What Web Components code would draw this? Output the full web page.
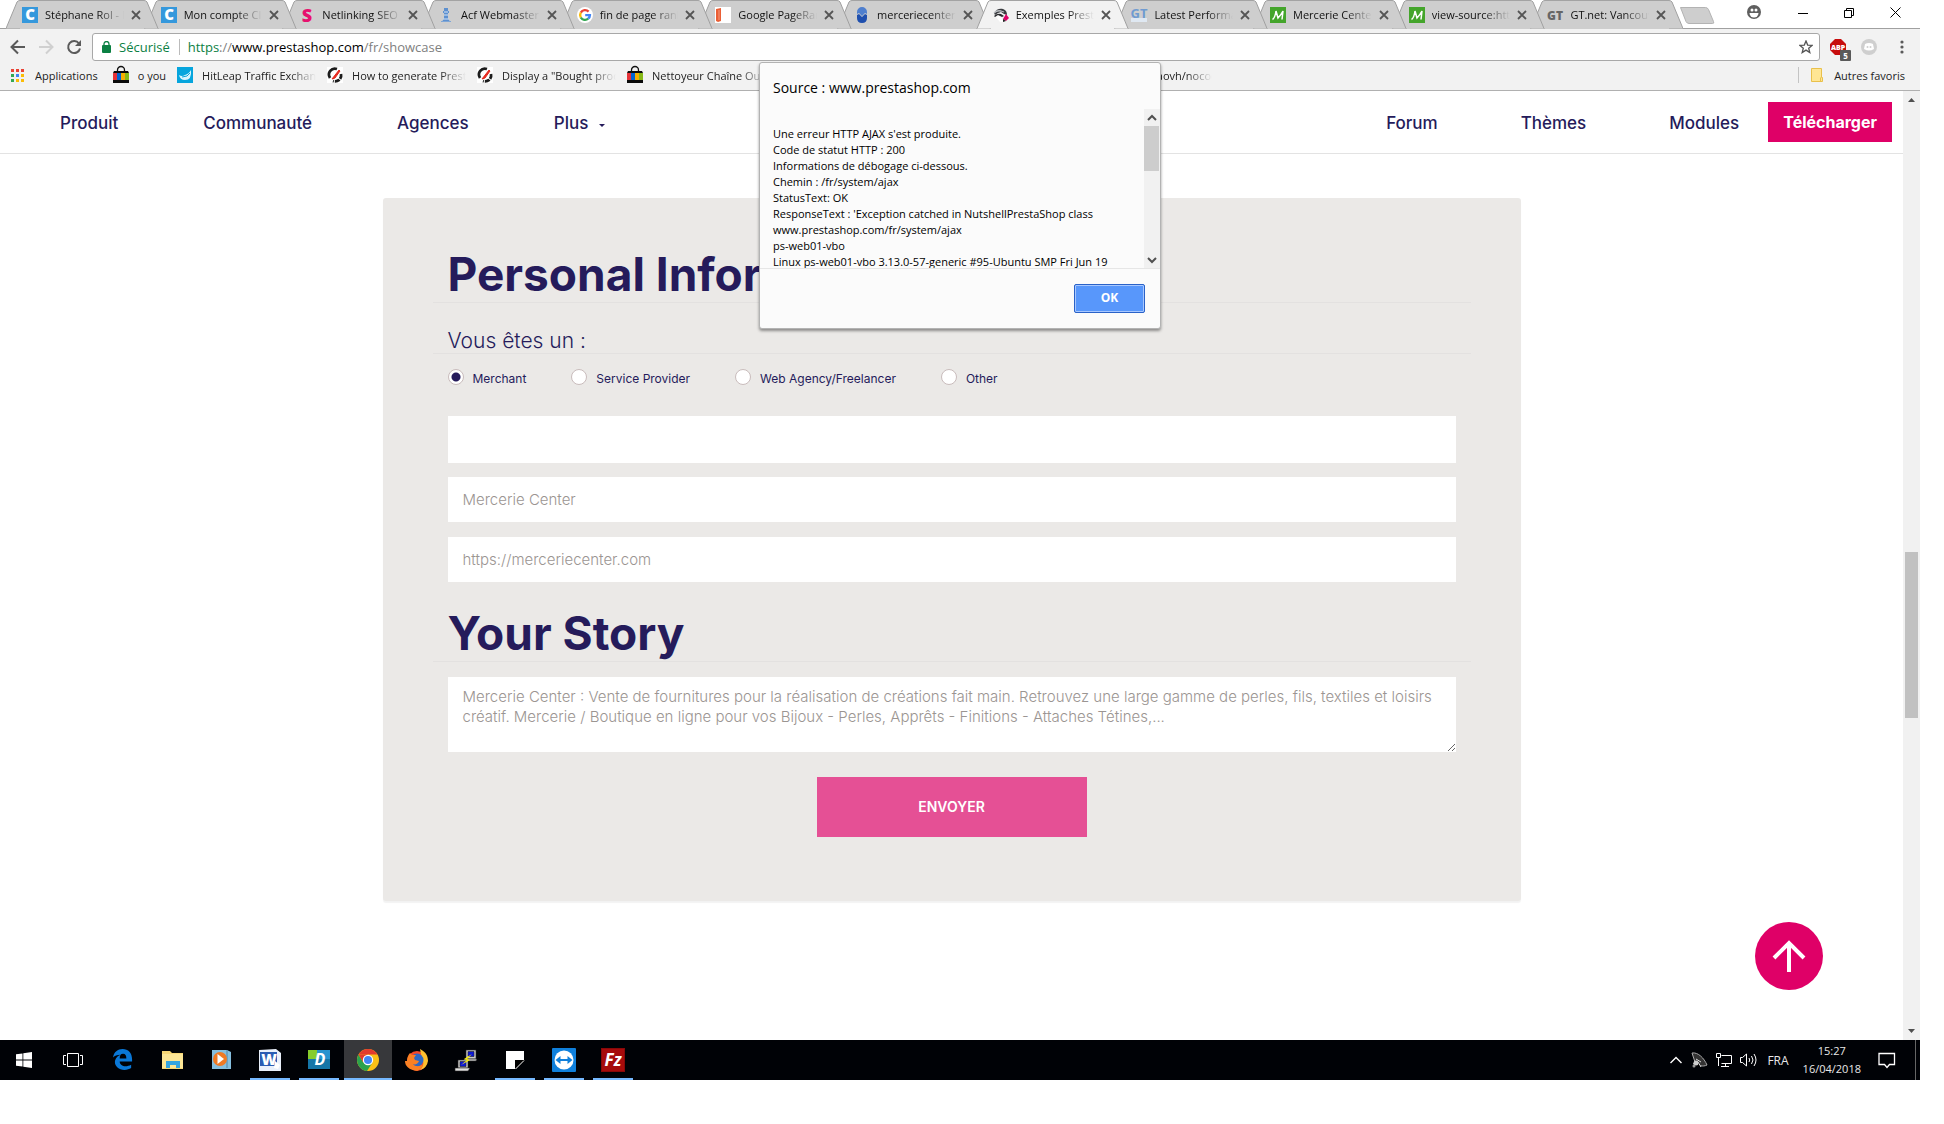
<!DOCTYPE html>
<html lang="fr">
<head>
<meta charset="utf-8">
<title>Exemples PrestaShop</title>
<style>
  html, body {
    height: 100%;
    margin: 0;
  }

  body {
    box-sizing: border-box;
    padding: 0 24px 44px 0;
    background: #fff;
    --ui: "Open Sans", "Noto Sans", sans-serif;
    --brand: Inter, "Open Sans", sans-serif;
    --navy: #251b5b;
    --pink: #df0067;
    font-family: var(--ui);
  }
</style>
</head>
<body>
<desk-top></desk-top>

<script>
const letterIcon = (letter, fill, color, size = 14, y = 13) => `
  <svg viewBox="0 0 16 16" width="16" height="16" overflow="visible" aria-hidden="true">
    <rect width="16" height="16" fill="${fill}"/>
    <text x="8" y="${y}" text-anchor="middle" font-family="Open Sans, sans-serif" font-weight="800" font-size="${size}" fill="${color}">${letter}</text>
  </svg>`;

const svg = (body, size = 16, box = 16) =>
  `<svg viewBox="0 0 ${box} ${box}" width="${size}" height="${size}" overflow="visible" aria-hidden="true">${body}</svg>`;

const icons = {
  c: letterIcon("C", "#3598dc", "#fff", 15),
  s: letterIcon("S", "none", "#e6126f", 18, 15),
  gtBlue: svg(`<rect y="11" width="16" height="4" fill="#dfe8f2"/>
    <text x="8" y="11" text-anchor="middle" font-family="Open Sans, sans-serif" font-weight="700" font-size="13" fill="#6f9bd1">GT</text>`),
  gtGrey: letterIcon("GT", "none", "#666", 12),
  m: svg(`<rect width="16" height="16" fill="#44a52b"/>
    <path d="M2.500 12.500Q5 11 6 4L8 11Q11 8 13 4L12 12.500" fill="none" stroke="#fff" stroke-width="1.500"/>`),
  tower: svg(`<path d="M6 1h4v3h1v2h-1v5l2 4H4l2-4V6H5V4h1z" fill="#5d90cf"/>
    <path d="M6 5h4M6 8h4M5 12h6" stroke="#d6e4f5"/><path d="M3 14h10v1H3z" fill="#7fa6d6"/>`),
  google: svg(`<circle cx="8" cy="8" r="8" fill="#fff"/>
    <g fill="none" stroke-width="2.400">
      <path d="M11.600 4.600A4.900 4.900 0 0 0 3.800 5.600" stroke="#ea4335"/>
      <path d="M3.800 5.600a4.900 4.900 0 0 0 0 4.900" stroke="#fbbc05"/>
      <path d="M3.800 10.500a4.900 4.900 0 0 0 7.400 1.200" stroke="#34a853"/>
      <path d="M11.200 11.700A4.900 4.900 0 0 0 12.900 8.100H8.200" stroke="#4285f4"/>
    </g>`),
  pagerank: svg(`<rect width="16" height="16" fill="#fff"/><path d="M1 2l5-1v13l-3 1-2-1z" fill="#ea5f36"/><path d="M4 3v10" stroke="#f49a7c"/>`),
  mercerie: svg(`<path d="M3 7V5a5 5 0 0 1 10 0v2l-2-1-3 3-3-3z" fill="#4f7fce"/>
    <path d="M3 8l2-1 3 3 3-3 2 1v3q0 5-5 5t-5-5z" fill="#1f4fae"/>`),
  presta: svg(`<path d="M1 6C3 2 7 1 10 2c3 1 4 3 4 6l-3-1-3-2-3 1-3 2z" fill="#3a3c40"/>
    <path d="M1 6q3-3 7-2l3 1" fill="none" stroke="#b9bcc0" stroke-width="1.300"/>
    <path d="M1 9q3-3 7-2l3 2-2 1-4-2-3 2z" fill="#2a2b2e"/>
    <path d="M3 10l3-1 3 2 1 4H7z" fill="#fff"/>
    <path d="M13 7l3 4-3 3-3-2z" fill="#df0067"/><path d="M10 12l3 2-3 1z" fill="#222"/>`),
  bag: svg(`<path d="M4.500 5V3a3 3 0 0 1 7 0v2" fill="none" stroke="#111" stroke-width="1.300"/>
    <path d="M1 4h14l1 2v10H0V6z" fill="#0a0a0a"/>
    <path d="M0 6h4v7H0z" fill="#e53238"/><path d="M4 6h4v7H4z" fill="#0064d2"/>
    <path d="M8 6h4v7H8z" fill="#f5af02"/><path d="M12 6h4v7h-4z" fill="#86b817"/>`),
  hitleap: svg(`<rect width="16" height="16" fill="#06a5dd"/>
    <path d="M2 8q3 2 6 0 4-1 6-5 1 10-6 10-5 0-6-5z" fill="#d9f4fd"/><path d="M5 10l5-1 3-3" stroke="#06a5dd" fill="none"/>`),
  dash: svg(`<rect width="16" height="16" fill="#fff"/>
    <g fill="none" stroke="#1c1c1c" stroke-width="2.800"><path d="M10 2A6 6 0 0 0 3 11"/><path d="M14 7a6 6 0 0 1-8 7" stroke-dasharray="5 1"/></g>
    <path d="M5 12L12 3l1 1-5 7z" fill="#e62a1f" stroke="#e62a1f"/>`),
  apps: svg(`<g><path d="M1 2h3v3H1zM6 2h3v3H6zM11 2h3v3h-3z" fill="#ea4335"/>
    <path d="M1 7h3v3H1z" fill="#34a853"/><path d="M6 7h3v3H6z" fill="#4285f4"/><path d="M11 7h3v3h-3z" fill="#fbbc05"/>
    <path d="M1 12h3v3H1z" fill="#34a853"/><path d="M6 12h3v3H6zM11 12h3v3h-3z" fill="#fbbc05"/></g>`),
  folder: svg(`<path d="M2.500 1.500h10v9h1v4h-11z" fill="#ffe694" stroke="#e9c04b"/><path d="M11.500 14v-3.500" stroke="#e9c04b" fill="none"/>`)
};

// Fills the shadow root of an element once.
function paint(host, html) {
  if (!host.shadowRoot) host.attachShadow({ mode: "open" });
  host.shadowRoot.innerHTML = html;
}

class DesktopView extends HTMLElement {
  connectedCallback() {
    paint(this, `
      <style>
        :host {
          display: flex;
          flex-direction: column;
          height: 100%;
          position: relative;
          overflow: hidden;
        }
        main {
          flex: 1;
          min-height: 0;
          display: flex;
          position: relative;
        }
        .page {
          flex: 1;
          overflow: hidden;
        }
        back-to-top {
          position: absolute;
          right: 97px;
          bottom: 50px;
        }
        alert-box {
          position: absolute;
          top: 62px;
          left: 0;
          right: 0;
          margin: 0 auto;
        }
      </style>
      <tab-strip></tab-strip>
      <address-bar></address-bar>
      <bookmark-bar></bookmark-bar>
      <main>
        <div class="page">
          <site-nav></site-nav>
          <showcase-form></showcase-form>
        </div>
        <scroll-track style="--before: 444; --thumb: 166; --after: 305"></scroll-track>
        <back-to-top></back-to-top>
      </main>
      <task-bar></task-bar>
      <alert-box></alert-box>`);
  }
}

class BrowserTab extends HTMLElement {
  connectedCallback() {
    const fill = this.hasAttribute("active") ? "#f2f2f2" : "#cecece";
    paint(this, `
      <style>
        :host {
          display: grid;
          flex: 1 1 0;
          min-width: 0;
          height: 29px;
          margin-right: -13px;
          position: relative;
        }
        .shape, .content {
          grid-area: 1 / 1;
          display: flex;
          min-width: 0;
        }
        .shape div {
          flex: 1;
          background: ${fill};
          border-top: 1px solid #a3a3a3;
          box-sizing: border-box;
        }
        .content {
          align-items: center;
          padding: 1px 16px 0 16px;
        }
        .title {
          flex: 1;
          margin-left: 7px;
          padding-bottom: 1px;
          overflow: hidden;
          white-space: nowrap;
          font-size: 11px;
          color: #111;
          -webkit-mask-image: linear-gradient(to left, transparent, #000 26px);
          mask-image: linear-gradient(to left, transparent, #000 26px);
        }
        button {
          width: 18px;
          height: 16px;
          padding: 0 0 0 7px;
          border: 0;
          background: none;
          display: flex;
          align-items: center;
        }
      </style>
      <div class="shape">
        <svg width="14" height="29" viewBox="0 0 14 29" aria-hidden="true"><path d="M0 28.500L11 2q1-1.500 3-1.500v28z" fill="${fill}"/><path d="M0 28.500L11 2q1-1.500 3-1.500" fill="none" stroke="#a0a0a0"/></svg>
        <div></div>
        <svg width="14" height="29" viewBox="0 0 14 29" aria-hidden="true"><path d="M14 28.500L3 2Q2 .5 0 .5v28z" fill="${fill}"/><path d="M14 28.500L3 2Q2 .5 0 .5" fill="none" stroke="#a0a0a0"/></svg>
      </div>
      <div class="content">
        ${icons[this.getAttribute("icon")]}
        <span class="title"><slot></slot></span>
        <button aria-label="Fermer">
          <svg width="10" height="10" viewBox="0 0 10 10"><path d="M1 1l8 8M9 1L1 9" stroke="#555" stroke-width="1.800"/></svg>
        </button>
      </div>`);
  }
}

class TabStrip extends HTMLElement {
  connectedCallback() {
    const tabs = [
      ["c", "Stéphane Rol - M"], ["c", "Mon compte Cli"], ["s", "Netlinking SEO"], ["tower", "Acf Webmaster"],
      ["google", "fin de page rank"], ["pagerank", "Google PageRank"], ["mercerie", "merceriecenter."],
      ["presta", "Exemples Prestas"], ["gtBlue", "Latest Performan"], ["m", "Mercerie Center"],
      ["m", "view-source:http"], ["gtGrey", "GT.net: Vancouv"]
    ];
    paint(this, `
      <style>
        :host {
          display: flex;
          height: 29px;
          background: linear-gradient(#fff 28px, #a0a0a0 28px);
        }
        .tabs {
          flex: 1;
          display: flex;
          padding: 0 13px 0 6px;
        }
        .new {
          width: 36px;
          height: 20px;
          margin: 6px 16px 0 -4px;
          padding: 0;
          border: 0;
          background: none;
        }
        .window {
          display: flex;
          padding-right: 2px;
        }
        .window button {
          width: 46px;
          height: 27px;
          padding: 0;
          border: 0;
          background: none;
        }
        .window button:first-child {
          margin-right: 3px;
        }
      </style>
      <div class="tabs">
        ${tabs.map(([icon, title], i) =>
          `<browser-tab icon="${icon}" ${i === 7 ? "active" : ""} style="z-index: ${i === 7 ? 20 : 12 - i}">${title}</browser-tab>`).join("")}
      </div>
      <button class="new" aria-label="Nouvel onglet">
        <svg width="36" height="20" viewBox="0 0 36 20"><path d="M1.500 1.500h25q2 0 3 2l5 12q1 2-1 2H10q-2 0-3-2z" fill="#cecece" stroke="#b3b3b3"/></svg>
      </button>
      <div class="window">
        <button aria-label="Profil"><svg width="14" height="14" viewBox="0 0 14 14"><circle cx="7" cy="7" r="7" fill="#5f5f5f"/><circle cx="5" cy="5" r="1.500" fill="#fff"/><circle cx="9" cy="5" r="1.500" fill="#fff"/><path d="M2.500 8h9A4.500 4.500 0 0 1 2.500 8z" fill="#fff"/></svg></button>
        <button aria-label="Réduire"><svg width="10" height="10"><path d="M0 5.500h10" stroke="#000"/></svg></button>
        <button aria-label="Restaurer"><svg width="10" height="10"><path d="M.5 2.500h7v7h-7zM2.500 2V.5h7v7H8" fill="none" stroke="#000"/></svg></button>
        <button aria-label="Fermer la fenêtre"><svg width="11" height="11"><path d="M.5.5l10 10M10.500.5l-10 10" stroke="#000"/></svg></button>
      </div>`);
  }
}

class AddressBar extends HTMLElement {
  connectedCallback() {
    paint(this, `
      <style>
        :host {
          display: flex;
          align-items: center;
          height: 32px;
          padding: 4px 13px 0 10px;
          box-sizing: border-box;
          background: #f2f2f2;
        }
        button {
          padding: 0;
          border: 0;
          background: none;
          display: flex;
          position: relative;
        }
        .nav {
          width: 28px;
        }
        .box {
          flex: 1;
          display: flex;
          align-items: center;
          height: 28px;
          margin: 0 9px 0 -2px;
          padding: 0 6px 0 9px;
          box-sizing: border-box;
          background: #fff;
          border: 1px solid #a8a8a8;
          border-radius: 3px;
          font-size: 13px;
        }
        .secure {
          margin-left: 8px;
          padding-right: 9px;
          line-height: 16px;
          border-right: 1px solid #bbb;
          color: #0b8043;
        }
        .url {
          flex: 1;
          margin-left: 8px;
          line-height: 16px;
          color: #808080;
        }
        .url b {
          font-weight: 400;
          color: #000;
        }
        .url i {
          font-style: normal;
          color: #0b8043;
        }
        .ext {
          width: 32px;
        }
        .badge {
          position: absolute;
          left: 11px;
          top: 11px;
          width: 11px;
          height: 11px;
          background: #5a5a5a;
          border-radius: 1px;
          color: #fff;
          font: 700 8px/11px var(--ui);
          text-align: center;
        }
      </style>
      <button class="nav" aria-label="Précédent"><svg width="16" height="16"><path d="M15 8H2M8 1.500L1.500 8 8 14.500" fill="none" stroke="#5a5a5a" stroke-width="2"/></svg></button>
      <button class="nav" aria-label="Suivant"><svg width="16" height="16"><path d="M1 8h13M8 1.500L14.500 8 8 14.500" fill="none" stroke="#d0d0d0" stroke-width="2"/></svg></button>
      <button class="nav" aria-label="Actualiser"><svg width="16" height="16"><path d="M13 4.500A6 6 0 1 0 14 9.500" fill="none" stroke="#5a5a5a" stroke-width="2"/><path d="M15 1v6H9z" fill="#5a5a5a"/></svg></button>
      <div class="box">
        <svg width="9" height="12"><path d="M2 5V3a2.500 2.500 0 0 1 5 0v2" fill="none" stroke="#0b8043" stroke-width="1.300"/><rect y="4" width="9" height="8" rx="1" fill="#0b8043"/></svg>
        <span class="secure">Sécurisé</span>
        <span class="url"><i>https</i>://<b>www.prestashop.com</b>/fr/showcase</span>
        <button aria-label="Ajouter aux favoris"><svg width="14" height="14" viewBox="0 0 14 14"><path d="M7 1l1.700 4.100 4.300.3-3.300 2.800 1.100 4.300L7 10.100l-3.800 2.400 1.100-4.300L1 5.400l4.300-.3z" fill="none" stroke="#555" stroke-width="1.300"/></svg></button>
      </div>
      <button class="ext" aria-label="Adblock Plus">
        <svg width="18" height="16" viewBox="0 0 18 16" overflow="visible"><path d="M6 0h6l5 5v6l-5 5H6l-5-5V5z" fill="#c70d0d"/><text x="9" y="11" text-anchor="middle" font-family="Open Sans, sans-serif" font-weight="800" font-size="7" fill="#fff">ABP</text></svg>
        <span class="badge">5</span>
      </button>
      <button class="ext" aria-label="Discord"><svg width="16" height="16"><circle cx="8" cy="8" r="8" fill="#cfcfcf"/><path d="M4 5q4-2 8 0l1 5q-5 3-10 0z" fill="#fff"/><circle cx="6.500" cy="8" r="1" fill="#cfcfcf"/><circle cx="9.500" cy="8" r="1" fill="#cfcfcf"/></svg></button>
      <button aria-label="Menu"><svg width="14" height="16"><g fill="#5a5a5a"><circle cx="9" cy="3" r="1.600"/><circle cx="9" cy="8" r="1.600"/><circle cx="9" cy="13" r="1.600"/></g></svg></button>`);
  }
}

class BookmarkItem extends HTMLElement {
  connectedCallback() {
    paint(this, `
      <style>
        :host {
          display: block;
          flex: none;
        }
        a {
          display: flex;
          align-items: center;
          gap: 9px;
          color: #222;
          font-size: 11px;
          text-decoration: none;
        }
        span {
          white-space: nowrap;
          overflow: hidden;
        }
        :host([long]) span {
          width: 114px;
          -webkit-mask-image: linear-gradient(to left, transparent, #000 26px);
          mask-image: linear-gradient(to left, transparent, #000 26px);
        }
      </style>
      <a href="#">${icons[this.getAttribute("icon")] || ""}<span><slot></slot></span></a>`);
  }
}

class BookmarkBar extends HTMLElement {
  connectedCallback() {
    paint(this, `
      <style>
        :host {
          display: flex;
          align-items: center;
          gap: 11px;
          height: 30px;
          padding: 0 15px 1px 10px;
          box-sizing: border-box;
          background: #f2f2f2;
          border-bottom: 1px solid #b0b0b0;
        }
        .first {
          margin-right: 4px;
        }
        .hidden-part {
          margin-left: 321px;
        }
        .others {
          margin-left: auto;
          padding-left: 10px;
          border-left: 1px solid #c4c4c4;
        }
      </style>
      <bookmark-item class="first" icon="apps">Applications</bookmark-item>
      <bookmark-item icon="bag">o you</bookmark-item>
      <bookmark-item icon="hitleap" long>HitLeap Traffic Exchange</bookmark-item>
      <bookmark-item icon="dash" long>How to generate Presta</bookmark-item>
      <bookmark-item icon="dash" long>Display a "Bought prod</bookmark-item>
      <bookmark-item icon="bag" long>Nettoyeur Chaîne Outil</bookmark-item>
      <bookmark-item class="hidden-part" long>http://prestaovh/nocode</bookmark-item>
      <bookmark-item class="others" icon="folder">Autres favoris</bookmark-item>`);
  }
}

// Scroll bar; --before, --thumb and --after share out the track.
class ScrollTrack extends HTMLElement {
  connectedCallback() {
    const slim = this.hasAttribute("chevrons");
    const up = slim ? `<path d="M4 11l4-4 4 4" fill="none" stroke="#505050" stroke-width="2"/>` : `<path d="M5 11l3.500-4 3.500 4z" fill="#505050"/>`;
    const down = slim ? `<path d="M4 7l4 4 4-4" fill="none" stroke="#505050" stroke-width="2"/>` : `<path d="M5 6l3.500 4L12 6z" fill="#505050"/>`;
    paint(this, `
      <style>
        :host {
          display: flex;
          flex-direction: column;
          width: 17px;
          background: #f1f1f1;
        }
        svg {
          flex: none;
        }
        .before { flex: var(--before) 0 0; }
        .after { flex: var(--after) 0 0; }
        .thumb {
          flex: var(--thumb) 0 0;
          margin: 0 2px;
          background: #c1c1c1;
        }
        :host([chevrons]) {
          width: 16px;
        }
        :host([chevrons]) .thumb {
          margin: 0 1px 0 0;
          background: #cdcdcd;
        }
      </style>
      <svg width="17" height="17">${up}</svg>
      <div class="before"></div><div class="thumb"></div><div class="after"></div>
      <svg width="17" height="17">${down}</svg>`);
  }
}

class SiteNav extends HTMLElement {
  connectedCallback() {
    paint(this, `
      <style>
        :host {
          display: block;
          border-bottom: 1px solid #e3e3e3;
        }
        nav, .links {
          display: flex;
          align-items: center;
        }
        nav {
          justify-content: space-between;
          height: 62px;
          padding: 0 11px 0 60px;
          font: 500 17px/20px var(--brand);
        }
        .links {
          gap: 85px;
        }
        .right {
          gap: 83px;
        }
        a {
          color: var(--navy);
          text-decoration: none;
          padding-top: 1px;
        }
        .caret {
          display: inline-block;
          margin: 0 0 2px 11px;
          border: 3px solid transparent;
          border-bottom: 0;
          border-top-color: currentColor;
        }
        .download {
          margin: -1px 0 0 -54px;
          padding: 10px 15px;
          background: var(--pink);
          color: #fff;
          font-size: 16px;
          font-weight: 700;
        }
      </style>
      <nav>
        <div class="links">
          <a href="#">Produit</a>
          <a href="#">Communauté</a>
          <a href="#">Agences</a>
          <a href="#">Plus<span class="caret"></span></a>
        </div>
        <div class="links right">
          <a href="#">Forum</a>
          <a href="#">Thèmes</a>
          <a href="#">Modules</a>
          <a href="#" class="download">Télécharger</a>
        </div>
      </nav>`);
  }
}

class RadioOption extends HTMLElement {
  connectedCallback() {
    paint(this, `
      <style>
        :host {
          display: block;
        }
        label {
          display: flex;
          align-items: center;
          gap: 9px;
          font-size: 12px;
          line-height: 20px;
        }
        input {
          appearance: none;
          box-sizing: border-box;
          width: 16px;
          height: 16px;
          margin: 0 0 4px;
          border: 1px solid #c9bcbc;
          border-radius: 50%;
          background: #fff;
        }
        input:checked {
          background: radial-gradient(circle, var(--navy) 4px, #fff 5px);
        }
      </style>
      <label><input type="radio" name="kind" ${this.hasAttribute("checked") ? "checked" : ""}><slot></slot></label>`);
  }
}

class ShowcaseForm extends HTMLElement {
  connectedCallback() {
    paint(this, `
      <style>
        :host {
          display: block;
          max-width: 1138px;
          margin: 44px auto 0;
          background: #ebe9e7;
          border-radius: 3px;
          box-shadow: 0 2px 1px rgba(0, 0, 0, 0.05);
          color: var(--navy);
          font-family: var(--brand);
        }
        form {
          display: flex;
          flex-direction: column;
          padding: 48px 50px 64px;
        }
        h1, h2 {
          margin: 0 0 14px;
          padding: 0 15px;
          border-bottom: 1px solid #e3e1e0;
        }
        h1 {
          font-size: 46px;
          line-height: 56px;
        }
        h2 {
          margin-bottom: 12px;
          padding-top: 12px;
          font-size: 21px;
          font-weight: 300;
          line-height: 24px;
        }
        .kinds {
          display: flex;
          gap: 45px;
          margin: 3px 15px 27px;
        }
        input, textarea {
          box-sizing: border-box;
          height: 45px;
          margin: 0 15px 15px;
          padding: 0 15px;
          border: 0;
          background: #fff;
          color: #9b9592;
          font: 300 15px/20px var(--brand);
        }
        input:first-of-type {
          height: 47px;
          margin-bottom: 14px;
        }
        textarea {
          height: 75px;
          margin-bottom: 25px;
          padding: 10px 15px;
          resize: vertical;
        }
        .story {
          margin: 8px 0 15px;
        }
        button {
          align-self: center;
          width: 270px;
          height: 60px;
          border: 0;
          background: #e55095;
          color: #fff;
          font: 600 14px/20px var(--brand);
        }
      </style>
      <form>
        <h1>Personal Information</h1>
        <h2>Vous êtes un :</h2>
        <div class="kinds">
          <radio-option checked>Merchant</radio-option>
          <radio-option>Service Provider</radio-option>
          <radio-option>Web Agency/Freelancer</radio-option>
          <radio-option>Other</radio-option>
        </div>
        <input type="text" aria-label="Nom">
        <input type="text" aria-label="Boutique" value="Mercerie Center">
        <input type="text" aria-label="Adresse du site" value="https://merceriecenter.com">
        <h1 class="story">Your Story</h1>
        <textarea aria-label="Your Story">Mercerie Center : Vente de fournitures pour la réalisation de créations fait main. Retrouvez une large gamme de perles, fils, textiles et loisirs créatif. Mercerie / Boutique en ligne pour vos Bijoux - Perles, Apprêts - Finitions - Attaches Tétines,...</textarea>
        <button type="button">ENVOYER</button>
      </form>`);
  }
}

class BackToTop extends HTMLElement {
  connectedCallback() {
    paint(this, `
      <style>
        :host {
          display: block;
        }
        button {
          display: flex;
          width: 68px;
          height: 68px;
          padding: 0;
          border: 0;
          border-radius: 50%;
          background: var(--pink);
        }
      </style>
      <button aria-label="Haut de page"><svg width="68" height="68"><path d="M34 50V21M19 36l15-15 15 15" fill="none" stroke="#fff" stroke-width="4"/></svg></button>`);
  }
}

class AlertBox extends HTMLElement {
  connectedCallback() {
    paint(this, `
      <style>
        :host {
          display: block;
          width: 402px;
          box-sizing: border-box;
          background: #fbfbfb;
          border: 1px solid #b3b3b3;
          border-radius: 3px;
          box-shadow: 0 2px 3px rgba(0, 0, 0, 0.4);
          z-index: 30;
        }
        h3 {
          margin: 0;
          padding: 15px 13px 11px;
          font-size: 14px;
          font-weight: 400;
          line-height: 20px;
        }
        .body {
          display: flex;
          height: 159px;
          border-bottom: 1px solid #e6e6e6;
        }
        p {
          flex: 1;
          margin: 0;
          padding: 17px 0 0 13px;
          overflow: hidden;
          font-size: 11px;
          line-height: 16px;
          white-space: pre-line;
        }
        footer {
          display: flex;
          justify-content: flex-end;
          padding: 15px;
        }
        button {
          width: 71px;
          height: 29px;
          padding: 0 0 1px;
          border: 1px solid #2a62c8;
          box-shadow: inset 0 0 0 1px #a8c8ff;
          border-radius: 2px;
          background: #5897fb;
          color: #fff;
          font: 700 12px/16px var(--ui);
        }
      </style>
      <h3>Source : www.prestashop.com</h3>
      <div class="body">
        <p>Une erreur HTTP AJAX s'est produite.
Code de statut HTTP : 200
Informations de débogage ci-dessous.
Chemin : /fr/system/ajax
StatusText: OK
ResponseText : 'Exception catched in NutshellPrestaShop class
www.prestashop.com/fr/system/ajax
ps-web01-vbo
Linux ps-web01-vbo 3.13.0-57-generic #95-Ubuntu SMP Fri Jun 19</p>
        <scroll-track chevrons style="--before: 0; --thumb: 45; --after: 81"></scroll-track>
      </div>
      <footer><button>OK</button></footer>`);
  }
}

class TaskButton extends HTMLElement {
  connectedCallback() {
    paint(this, `
      <style>
        :host {
          display: block;
          width: 49px;
        }
        button {
          display: flex;
          align-items: center;
          justify-content: center;
          width: 48px;
          height: 40px;
          padding: 0 0 1px;
          border: 0;
          background: none;
        }
        :host([open]) button {
          background: linear-gradient(#76b9ff, #76b9ff) center bottom / 40px 2px no-repeat;
        }
        :host([current]) button {
          background: linear-gradient(#76b9ff, #76b9ff) center bottom / 48px 2px no-repeat #37383b;
        }
      </style>
      <button aria-label="${this.getAttribute("label")}"><slot></slot></button>`);
  }
}

class TaskBar extends HTMLElement {
  connectedCallback() {
    const apps = [
      ["Démarrer", "", svg(`<path d="M0 2.300L6.500 1.400v6.200H0zM7.300 1.300L16 0v7.600H7.300zM0 8.400h6.500v6.200L0 13.700zM7.300 8.400H16V16l-8.700-1.300z" fill="#fff"/>`)],
      ["Affichage des tâches", "", svg(`<path d="M4.500 3.500h11v13h-11zM3 5.500H.5v9H3M17 5.500h2.500v9H17" fill="none" stroke="#fff"/>`, 20, 20)],
      ["Edge", "", svg(`<path d="M0 9C1 3 5 0 10 0c6 0 10 4 10 11v2H7c0 3 3 5 6 5 2 0 4-.6 6-1.600V20c-2 1-4 2-7 2-6 0-10-4-10-8 0-4 3-7 6-8C4 6 2 7 0 9zm7 1h7c0-3-1-5-3.500-5S7 7 7 10z" fill="#0a78d7"/>`, 21, 22)],
      ["Explorateur", "", svg(`<path d="M0 2h8l2 2h11v16H0z" fill="#f8d775"/><path d="M0 5h21v14H0z" fill="#fde695"/><path d="M4 19v-7h14v7h-4v-3H8v3z" fill="#35a5e0"/>`, 21, 21)],
      ["Lecteur", "", svg(`<path d="M1 1l15 0 4 2v17H1z" fill="#86bfdf"/><path d="M16 1v18" stroke="#4f87aa"/><circle cx="9" cy="10" r="7" fill="#f07a24"/><path d="M6.500 5l6.500 5-6.500 5z" fill="#fff"/>`, 21, 21)],
      ["Word", "open", svg(`<path d="M0 1l17-1 5 4v18H0z" fill="#e9f0fb"/><path d="M1 3h17v14H1z" fill="#2a5cb3"/><text x="10" y="16" text-anchor="middle" font-family="Open Sans, sans-serif" font-weight="800" font-size="15" fill="#fff">W</text><path d="M16 12l5 4-2 4-4-1z" fill="#fff"/>`, 22, 22)],
      ["Partage", "open", svg(`<path d="M0 1h10v9H0z" fill="#86cc2c"/><path d="M9 1h13v9H9z" fill="#2893cf"/><path d="M0 10h22v10H0z" fill="#1576a8"/><text x="12" y="16" text-anchor="middle" font-family="Open Sans, sans-serif" font-style="italic" font-weight="700" font-size="16" fill="#fff">D</text>`, 22, 22)],
      ["Chrome", "current", svg(`<circle cx="11" cy="11" r="11" fill="#fbc116"/><path d="M1.500 5.500A11 11 0 0 1 20.500 5.500H11z" fill="#e33b2e"/><path d="M1.500 5.500A11 11 0 0 0 10 22l5.500-8.500L11 16l-5-3z" fill="#2ba24c"/><path d="M1.500 5.500L6 13l5-7.500z" fill="#e33b2e"/><circle cx="11" cy="11" r="5.200" fill="#fff"/><circle cx="11" cy="11" r="4" fill="#4285f4"/>`, 22, 22)],
      ["Firefox", "", svg(`<circle cx="11" cy="12" r="10" fill="#f4482a"/><path d="M14 0c6 3 8 7 8 12a11 11 0 0 1-8 9c4-4 4-8 2-11z" fill="#fdc02f"/><circle cx="11" cy="11" r="6.500" fill="#2d67c4"/><path d="M1 12c0-3 1-6 3-8l2 2 4 0-2 3 1 2 4 1c-1 3-4 4-6 3 2 3 7 3 10 0-1 6-6 8-10 6-4-1-8-4-8-9z" fill="#fa8024"/>`, 22, 22)],
      ["PuTTY", "", svg(`<g stroke="#222" stroke-width=".6"><path d="M11 1h10v9H11z" fill="#c9c9c9"/><path d="M13 2.500h6v5h-6z" fill="#0a16d8"/><path d="M9 10h13l-1 2H9z" fill="#c9c9c9"/><path d="M3 11h10v8H3z" fill="#c9c9c9"/><path d="M5 12.500h6v5H5z" fill="#0a16d8"/><path d="M0 19h15l-2 3H0z" fill="#e2e2e2"/></g><path d="M17 5l-8 5 3 1-6 5 9-5-3-1z" fill="#fdf100"/>`, 22, 22)],
      ["Notes", "open", svg(`<path d="M0 0h18v18H0z" fill="#fff"/><path d="M9 18V9h9v9z" fill="#000"/><path d="M9 18V9h9z" fill="#000"/><path d="M10.500 18L18 10.500V18z" fill="#000206"/><path d="M9.500 18L18 9.500" stroke="#fff"/>`, 18, 18)],
      ["TeamViewer", "open", svg(`<rect width="24" height="24" rx="1" fill="#0f80dc"/><circle cx="12" cy="12" r="9.500" fill="#fff"/><path d="M3.500 12l5-4v3h7V8l5 4-5 4v-3h-7v3z" fill="#0f80dc"/>`, 24, 24)],
      ["FileZilla", "open", svg(`<rect width="24" height="24" fill="#a60b0b"/><rect x=".5" y=".5" width="23" height="23" fill="none" stroke="#6a0606" stroke-dasharray="1 1"/><text x="12" y="18" text-anchor="middle" font-family="Open Sans, sans-serif" font-style="italic" font-weight="700" font-size="17" fill="#fff">Fz</text>`, 24, 24)]
    ];
    paint(this, `
      <style>
        :host {
          display: flex;
          align-items: center;
          height: 40px;
          background: #000206;
          color: #e8e8e8;
          font-size: 11px;
        }
        .apps {
          flex: 1;
          display: flex;
        }
        task-button:nth-child(3) {
          margin-left: 1px;
        }
        .tray {
          display: flex;
          align-items: center;
          gap: 8px;
        }
        .tray svg:nth-child(4) {
          margin-right: 2px;
        }
        .lang {
          font-size: 12px;
        }
        .clock {
          margin: 0 9px 0 6px;
          line-height: 18px;
          text-align: center;
        }
        .edge {
          width: 4px;
          height: 40px;
          margin-left: 11px;
          border-left: 1px solid #666;
        }
      </style>
      <div class="apps">
        ${apps.map(([label, state, icon]) => `<task-button label="${label}" ${state}>${icon}</task-button>`).join("")}
      </div>
      <div class="tray">
        <svg width="14" height="16"><path d="M1.500 11L7 5.500l5.500 5.500" fill="none" stroke="#fff" stroke-width="1.400"/></svg>
        <svg width="17" height="16"><path d="M1 1c6-1 12 5 15 12-4 2-9 1-12-3z" fill="#333" stroke="#aaa"/><path d="M5 7l5 3M2 12l5-2 3 5" stroke="#ddd"/><circle cx="5" cy="11" r="2.500" fill="#ccc"/><circle cx="3" cy="14" r="1.500" fill="#999"/></svg>
        <svg width="16" height="14"><path d="M5.500 2.500h10v8h-10M.5.500h4v4h-4zM2.500 5v8M5 13.500h8M9.500 11v2" fill="none" stroke="#fff"/></svg>
        <svg width="17" height="14"><path d="M.5 4.500h2L6.500 1v12l-4-3.500h-2zM9 5q1.500 2 0 4M11.500 3q3 4 0 8M14 1q4 6 0 12" fill="none" stroke="#fff"/></svg>
        <span class="lang">FRA</span>
        <div class="clock"><div>15:27</div><div>16/04/2018</div></div>
        <svg width="18" height="17"><path d="M1 1.500h15.500v11H11.500l-2.500 3-2.500-3H1z" fill="none" stroke="#fff" stroke-width="1.300"/></svg>
        <div class="edge"></div>
      </div>`);
  }
}

customElements.define("browser-tab", BrowserTab);
customElements.define("tab-strip", TabStrip);
customElements.define("address-bar", AddressBar);
customElements.define("bookmark-item", BookmarkItem);
customElements.define("bookmark-bar", BookmarkBar);
customElements.define("scroll-track", ScrollTrack);
customElements.define("site-nav", SiteNav);
customElements.define("radio-option", RadioOption);
customElements.define("showcase-form", ShowcaseForm);
customElements.define("back-to-top", BackToTop);
customElements.define("alert-box", AlertBox);
customElements.define("task-button", TaskButton);
customElements.define("task-bar", TaskBar);
customElements.define("desk-top", DesktopView);
</script>
</body>
</html>
